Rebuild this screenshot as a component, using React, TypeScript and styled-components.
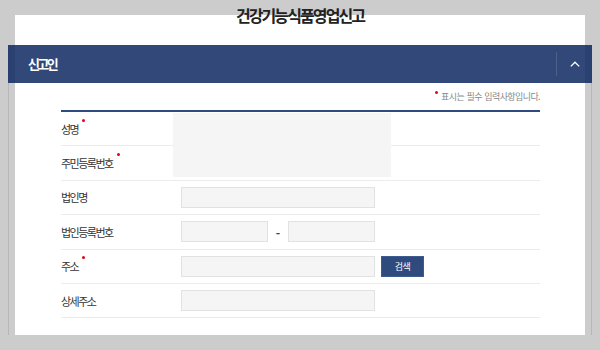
import styled, { createGlobalStyle } from 'styled-components';

const GlobalStyle = createGlobalStyle`
  html, body {
    margin: 0;
    background: #cccccc;
    font-family: "Noto Sans CJK KR", "Noto Sans", sans-serif;
    color: #333;
  }
`;

type Field = {
  label: string;
  required?: boolean;
  kind: 'hidden' | 'text' | 'split' | 'search';
};

const fields: Field[] = [
  { label: '성명', required: true, kind: 'hidden' },
  { label: '주민등록번호', required: true, kind: 'hidden' },
  { label: '법인명', kind: 'text' },
  { label: '법인등록번호', kind: 'split' },
  { label: '주소', required: true, kind: 'search' },
  { label: '상세주소', kind: 'text' }
];

export default function App() {
  return (
    <>
      <GlobalStyle />
      <Sheet>
        <Title>건강기능식품영업신고</Title>
        <Section>
          <SectionHeader>
            <SectionTitle>신고인</SectionTitle>
            <Toggle type="button" aria-label="접기">
              <svg width="10" height="6" viewBox="0 0 10 6">
                <polyline points="0.8,5.4 5,1.2 9.2,5.4" fill="none" stroke="#fff" strokeWidth="1.3" />
              </svg>
            </Toggle>
          </SectionHeader>
          <SectionBody>
            <Note>
              <Dot $note />
              표시는 필수 입력사항입니다.
            </Note>
            <FormTable>
              {fields.map((f) => (
                <Row key={f.label}>
                  <Label>
                    {f.label}
                    {f.required && <Dot />}
                  </Label>
                  <Cell>
                    {f.kind === 'text' && <Input />}
                    {f.kind === 'split' && (
                      <>
                        <Input $w={87} />
                        <Dash>-</Dash>
                        <Input $w={87} />
                      </>
                    )}
                    {f.kind === 'search' && (
                      <>
                        <Input />
                        <SearchButton type="button">검색</SearchButton>
                      </>
                    )}
                  </Cell>
                </Row>
              ))}
              {/* masked personal info block over the first two rows */}
              <Masked />
            </FormTable>
          </SectionBody>
        </Section>
      </Sheet>
    </>
  );
}

const Sheet = styled.div`
  display: flex;
  flex-direction: column;
  margin: 15px 15px 0;
  height: 320px;
  background: #fff;
`;

const Title = styled.h1`
  margin: -15px 0 0;
  height: 30px;
  line-height: 30px;
  text-align: center;
  font-size: 16px;
  font-weight: 700;
  letter-spacing: -1.9px;
  color: #222;
`;

const Section = styled.section`
  margin: 15px -7px 0;
  padding-bottom: 26px;
  border: 1px solid #b7b7b7;
  border-top: 0;
  flex-shrink: 0;
`;

const SectionHeader = styled.div`
  display: flex;
  align-items: stretch;
  height: 38px;
  margin: 0 -1px;
  background: rgba(16, 42, 98, 0.86);
`;

const SectionTitle = styled.h2`
  flex: 1;
  margin: 0;
  padding-left: 20px;
  line-height: 38px;
  font-size: 13px;
  font-weight: 700;
  letter-spacing: -2.6px;
  color: #fff;
`;

const Toggle = styled.button`
  width: 36px;
  margin: 7px 0;
  padding: 0;
  border: 0;
  border-left: 1px solid rgba(255, 255, 255, 0.14);
  background: none;
  display: flex;
  align-items: center;
  justify-content: center;
  cursor: pointer;
`;

const SectionBody = styled.div`
  padding: 0 51px 0 52px;
`;

const Note = styled.p`
  margin: 0;
  padding-top: 7px;
  margin-bottom: 6px;
  height: 14px;
  line-height: 14px;
  text-align: right;
  font-size: 9px;
  letter-spacing: -0.6px;
  word-spacing: 1px;
  color: #888;
`;

const Dot = styled.span<{ $note?: boolean }>`
  display: inline-block;
  width: 3px;
  height: 3px;
  border-radius: 50%;
  background: #e60012;
  vertical-align: top;
  margin: ${(p) => (p.$note ? '1px 3px 0 0' : '-3px 0 0 4px')};
`;

const FormTable = styled.div`
  position: relative;
  border-top: 2px solid #2f4a7c;
`;

const Row = styled.div`
  display: flex;
  align-items: center;
  height: 34.4px;
  box-sizing: border-box;
  border-bottom: 1px solid #ececec;
`;

const Label = styled.div`
  width: 112px;
  flex-shrink: 0;
  font-size: 11px;
  letter-spacing: -1.5px;
  line-height: 14px;
  color: #333;
`;

const Cell = styled.div`
  flex: 1;
  display: flex;
  align-items: center;
  padding-left: 8px;
`;

const Input = styled.input<{ $w?: number }>`
  box-sizing: border-box;
  width: ${(p) => p.$w ?? 194}px;
  height: 21px;
  margin: 0;
  padding: 0 6px;
  border: 1px solid #e2e2e2;
  background: #f5f5f5;
  outline: none;
`;

const Dash = styled.span`
  width: 20px;
  text-align: center;
  font-size: 12px;
  font-weight: 700;
  color: #444;
`;

const SearchButton = styled.button`
  margin-left: 6px;
  width: 43px;
  height: 21px;
  padding: 0;
  border: 1px solid #3e5a8e;
  background: #2f4a7c;
  color: #fff;
  font-family: inherit;
  font-size: 9px;
  letter-spacing: -0.5px;
  cursor: pointer;
`;

const Masked = styled.div`
  position: absolute;
  top: 1px;
  left: 112px;
  width: 218px;
  height: 64px;
  background: #f5f5f5;
`;
